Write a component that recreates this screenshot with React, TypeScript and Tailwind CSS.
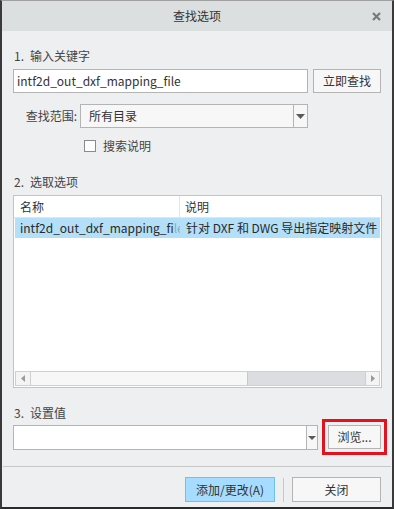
import React from "react";

const font = { fontFamily: '"Noto Sans CJK SC", "Noto Sans", sans-serif' };

function Caret() {
  return (
    <svg width="9" height="5" viewBox="0 0 9 5">
      <path d="M0 0 H9 L4.5 5 Z" fill="#5a5a5a" />
    </svg>
  );
}

function Label({ n, text }: { n: string; text: string }) {
  return (
    <div className="h-[16px] leading-[16px] pl-[1px] flex">
      <span>{n}.</span>
      <span className="ml-[6px]">{text}</span>
    </div>
  );
}

export default function App() {
  return (
    <div
      className="w-[394px] h-[509px] bg-[#eeeff1] border-l-2 border-r-2 border-b-2 border-t border-l-[#3a3a3a] border-r-[#3a3a3a] border-b-[#2a2a2a] border-t-[#a0a0a0] flex flex-col text-[12px] text-[#444] overflow-hidden"
      style={font}
    >
      {/* title bar */}
      <div className="h-[30px] bg-[#dcdfdf] relative flex items-center justify-center shrink-0">
        <span className="text-[12px] text-[#333]">查找选项</span>
        <svg className="absolute right-[11px] top-[11px]" width="9" height="9" viewBox="0 0 9 9">
          <path d="M1 1 L8 8 M8 1 L1 8" stroke="#7a7a7a" strokeWidth="2.2" />
        </svg>
      </div>

      <div className="px-[11px] flex flex-col">
        <div className="mt-[17px]">
          <Label n="1" text="输入关键字" />
        </div>
        <div className="mt-[5px] flex h-[24px]">
          <div className="w-[295px] h-[24px] bg-white border border-[#b4b4b4] flex items-center pl-[3px] text-[12px] text-[#333]">
            intf2d_out_dxf_mapping_file
          </div>
          <div className="ml-[5px] w-[68px] h-[24px] bg-[#f7f7f7] border border-[#b4b4b4] flex items-center justify-center text-[#333]">
            立即查找
          </div>
        </div>

        <div className="mt-[11px] flex h-[24px] items-center">
          <div className="w-[67px] text-right pr-[3px] text-[#444]">查找范围:</div>
          <div className="w-[228px] h-[24px] bg-[#f7f7f7] border border-[#b4b4b4] flex">
            <div className="flex-1 flex items-center pl-[8px] text-[#333]">所有目录</div>
            <div className="w-[14px] border-l border-[#b4b4b4] flex items-center justify-center">
              <Caret />
            </div>
          </div>
        </div>

        <div className="mt-[10px] flex items-center h-[16px] pl-[71px]">
          <div className="w-[12px] h-[12px] bg-white border border-[#8a8a8a]" />
          <span className="ml-[7px] leading-[16px]">搜索说明</span>
        </div>

        <div className="mt-[20px]">
          <Label n="2" text="选取选项" />
        </div>

        <div className="mt-[5px] w-[369px] h-[193px] bg-white border border-[#c4c4c4] flex flex-col">
          <div className="h-[22px] flex border-b border-[#e4e4e4] shrink-0">
            <div className="w-[166px] border-r border-[#e4e4e4] flex items-center pl-[6px] text-[#333]">名称</div>
            <div className="flex-1 flex items-center pl-[5px] text-[#333]">说明</div>
          </div>
          <div className="mx-[1px] h-[20px] bg-[#b3dff8] flex items-center text-[#2a2a2a] overflow-hidden whitespace-nowrap">
            <div className="w-[165px] pl-[5px] overflow-hidden relative">
              intf2d_out_dxf_mapping_file
              <div className="absolute right-0 top-0 bottom-0 w-[6px] bg-[#b3dff8]/70" />
            </div>
            <div className="flex-1 pl-[6px] overflow-hidden">针对 DXF 和 DWG 导出指定映射文件</div>
          </div>
          <div className="flex-1" />
          <div className="mx-[1px] mb-[1px] h-[15px] flex border border-[#d0d0d0] bg-[#dcdde0]">
            <div className="w-[15px] bg-[#f4f4f4] border-r border-[#d0d0d0] flex items-center justify-center">
              <svg width="4" height="7" viewBox="0 0 4 7"><path d="M4 0 V7 L0 3.5 Z" fill="#9a9a9a" /></svg>
            </div>
            <div className="w-[217px] bg-[#f7f7f7] border-r border-[#c8c8c8]" />
            <div className="flex-1" />
            <div className="w-[14px] bg-[#f4f4f4] border-l border-[#d0d0d0] flex items-center justify-center">
              <svg width="4" height="7" viewBox="0 0 4 7"><path d="M0 0 V7 L4 3.5 Z" fill="#9a9a9a" /></svg>
            </div>
          </div>
        </div>

        <div className="mt-[17px]">
          <Label n="3" text="设置值" />
        </div>

        <div className="mt-[4px] flex items-start">
          <div className="w-[305px] h-[25px] bg-white border border-[#b4b4b4] flex">
            <div className="flex-1" />
            <div className="w-[11px] border-l border-[#b4b4b4] bg-[#f7f7f7] flex items-center justify-center">
              <svg width="8" height="4" viewBox="0 0 8 4"><path d="M0 0 H8 L4 4 Z" fill="#5a5a5a" /></svg>
            </div>
          </div>
          <div className="relative ml-[10px]">
            <div className="w-[53px] h-[24px] bg-[#f7f7f7] border border-[#b4b4b4] flex items-center justify-center text-[#333]">
              浏览...
            </div>
            <div className="absolute -left-[6px] -top-[6px] w-[65px] h-[36px] border-[3px] border-[#e3121f]" />
          </div>
        </div>
      </div>

      <div className="mt-[16px] mx-[1px] h-px bg-[#c8c8c8]" />

      <div className="mt-[10px] flex items-center pr-[11px] justify-end">
        <div className="w-[90px] h-[25px] bg-[#a6dcff] border border-[#6cc3f3] flex items-center justify-center text-[#333]">
          添加/更改(A)
        </div>
        <div className="mx-[8px] w-px h-[24px] bg-[#c8c8c8]" />
        <div className="w-[89px] h-[25px] bg-[#f7f7f7] border border-[#b4b4b4] flex items-center justify-center text-[#333]">
          关闭
        </div>
      </div>
    </div>
  );
}
